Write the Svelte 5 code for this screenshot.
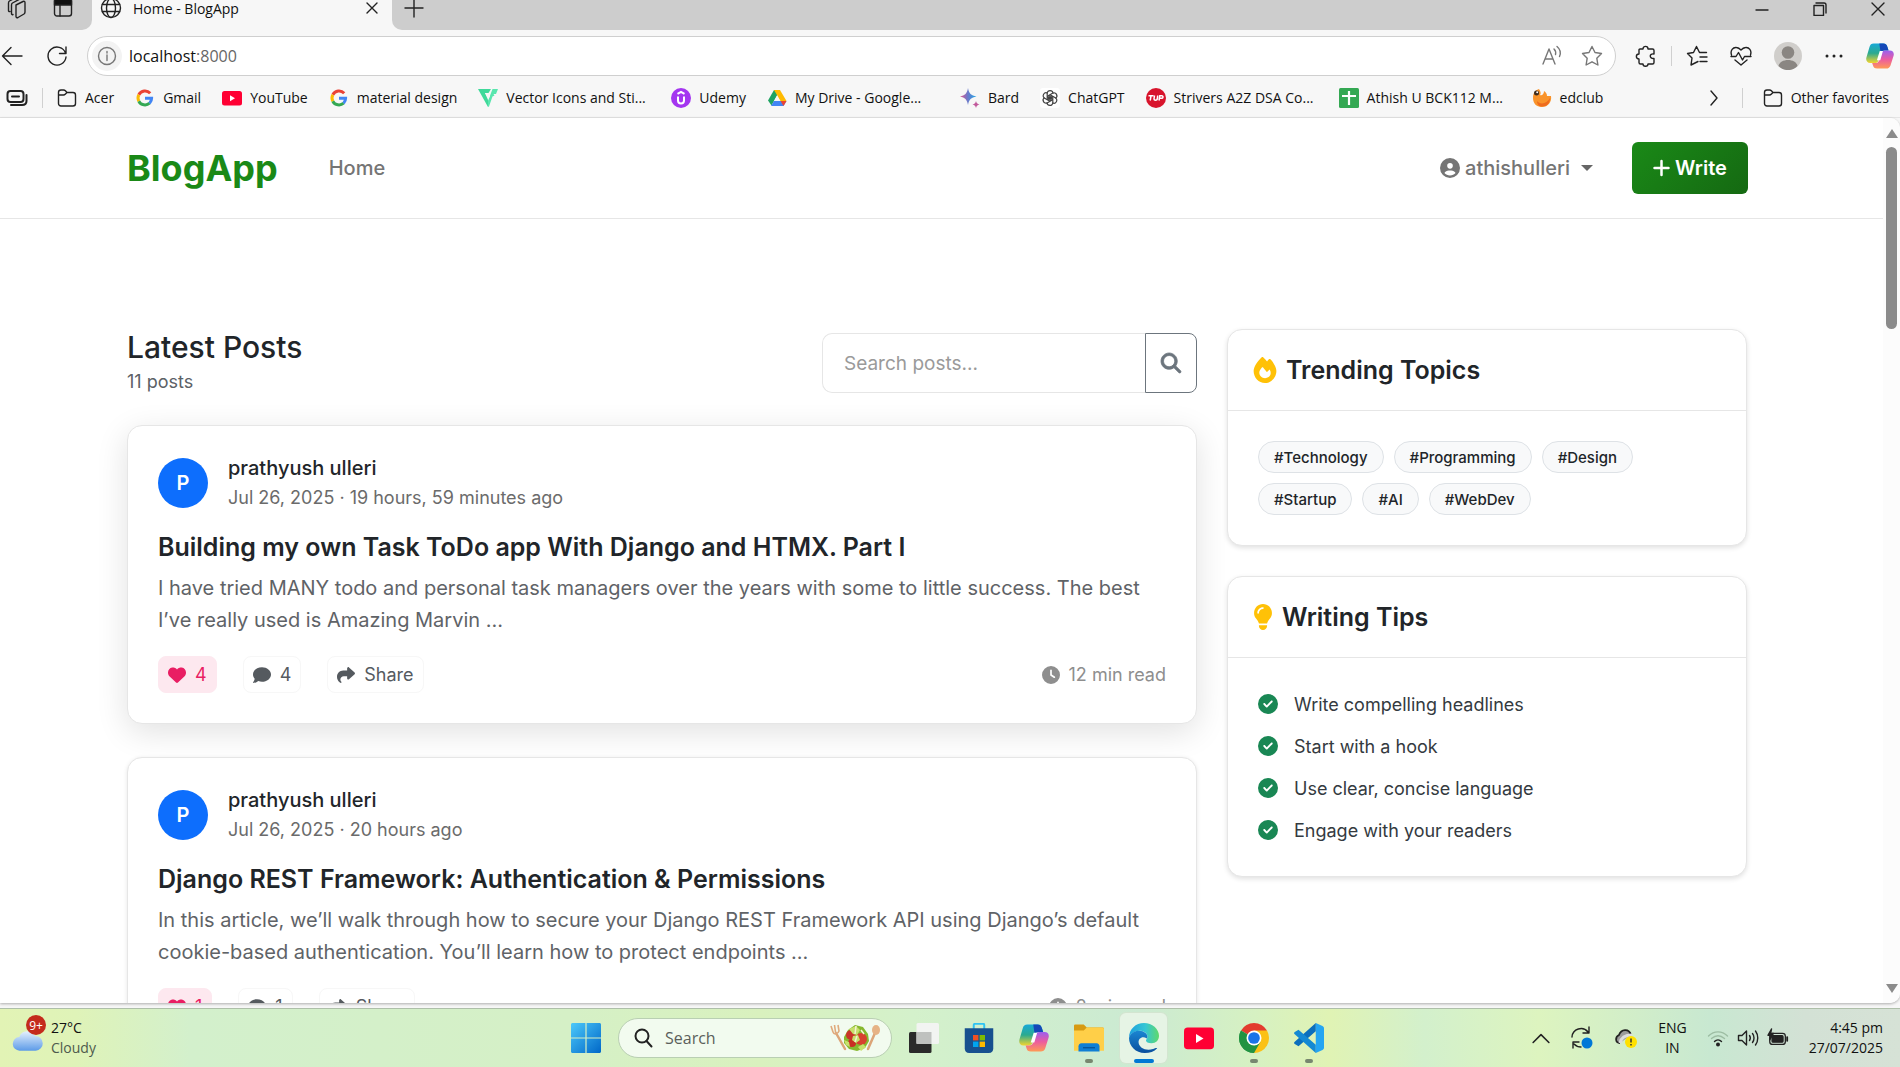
<script>
  const bookmarks = [
    { icon: 'folder', label: 'Acer' },
    { icon: 'google', label: 'Gmail' },
    { icon: 'youtube', label: 'YouTube' },
    { icon: 'google', label: 'material design' },
    { icon: 'vector', label: 'Vector Icons and Sti...', long: true },
    { icon: 'udemy', label: 'Udemy' },
    { icon: 'drive', label: 'My Drive - Google...', long: true },
    { icon: 'bard', label: 'Bard' },
    { icon: 'chatgpt', label: 'ChatGPT' },
    { icon: 'tuf', label: 'Strivers A2Z DSA Co...', long: true },
    { icon: 'sheet', label: 'Athish U BCK112 M...', long: true },
    { icon: 'edclub', label: 'edclub' }
  ];

  const posts = [
    {
      author: 'prathyush ulleri',
      when: 'Jul 26, 2025 · 19 hours, 59 minutes ago',
      title: 'Building my own Task ToDo app With Django and HTMX. Part I',
      excerpt:
        'I have tried MANY todo and personal task managers over the years with some to little success. The best I’ve really used is Amazing Marvin ...',
      likes: 4,
      comments: 4,
      read: '12 min read',
      raised: true
    },
    {
      author: 'prathyush ulleri',
      when: 'Jul 26, 2025 · 20 hours ago',
      title: 'Django REST Framework: Authentication & Permissions',
      excerpt:
        'In this article, we’ll walk through how to secure your Django REST Framework API using Django’s default cookie-based authentication. You’ll learn how to protect endpoints ...',
      likes: 1,
      comments: 1,
      read: '2 min read',
      raised: false
    }
  ];

  const topics = ['#Technology', '#Programming', '#Design', '#Startup', '#AI', '#WebDev'];
  const tips = [
    'Write compelling headlines',
    'Start with a hook',
    'Use clear, concise language',
    'Engage with your readers'
  ];

  const apps = [
    { icon: 'taskview', name: 'Task view' },
    { icon: 'store', name: 'Store' },
    { icon: 'copilot', name: 'Copilot' },
    { icon: 'explorer', name: 'File Explorer', running: true },
    { icon: 'edge', name: 'Edge', active: true },
    { icon: 'youtube', name: 'YouTube' },
    { icon: 'chrome', name: 'Chrome', running: true },
    { icon: 'vscode', name: 'Code', running: true }
  ];
</script>

{#snippet icon(name, size = 20)}
  <svg class="icon" width={size} height={size} viewBox="0 0 20 20" fill="none" stroke="none" aria-hidden="true">
    {#if name === 'folder'}
      <path d="M1.5 15.5V4.5c0-1.6 1-2.5 2.5-2.5h2.6c.8 0 1.3.3 1.8.8L10 4.5h6c1.500 0 2.500 1 2.500 2.500v8.500c0 1.500-1 2.500-2.500 2.500H4c-1.500 0-2.500-1-2.500-2.500z M1.500 7h5c.7 0 1.200-.2 1.700-.7L10 4.500" stroke="#222" stroke-width="1.400" />
    {:else if name === 'google'}
      <path d="M15.200 5.300A7 7 0 0 0 3.800 6.800" stroke="#ea4335" stroke-width="3" />
      <path d="M3.800 6.800a7 7 0 0 0 0 6.400" stroke="#fbbc05" stroke-width="3" />
      <path d="M3.800 13.200a7 7 0 0 0 10.800 2" stroke="#34a853" stroke-width="3" />
      <path d="M14.600 15.200A7 7 0 0 0 16.600 10.300H10" stroke="#4285f4" stroke-width="3" />
    {:else if name === 'youtube'}
      <rect x="0" y="3" width="20" height="14.500" rx="2.500" fill="#ff0033" />
      <path d="M8 7.300l5 3-5 3z" fill="#fff" />
    {:else if name === 'vector'}
      <path d="M0 1h13l-2.500 4H7l3.500 8-.5 6z" fill="#3fd99a" />
      <path d="M14.500 1H20l-2 5h-2.500l1 1.500-2 1L11 18.500l-1 .5v-6z" fill="#59e6ae" />
      <path d="M7 5h3.500L12 8l-1.500 3z" fill="#f7f7f7" />
    {:else if name === 'udemy'}
      <circle cx="10" cy="10" r="10" fill="#a435f0" />
      <path d="M7 8.500v4c0 4 6 4 6 0v-4M6.500 5.800L10 3.800l3.500 2" stroke="#fff" stroke-width="2" />
    {:else if name === 'drive'}
      <path d="M7 2h6l-3 5.500L4.500 17.500 1 12.500z" fill="#1ea362" />
      <path d="M7 2h6l6.500 11h-6z" fill="#ffba00" />
      <path d="M4 18l3-5h12.500l-3 5z" fill="#4285f4" />
      <path d="M13.500 13h6l-3 5z" fill="#ea4335" />
      <path d="M10 7.500L13 13H7z" fill="#f7f7f7" />
    {:else if name === 'bard'}
      <defs><linearGradient id="bardFill"><stop stop-color="#e0568c" /><stop offset=".45" stop-color="#6f78c8" /><stop offset="1" stop-color="#1fa8e8" /></linearGradient></defs>
      <path d="M8 0c1 5.500 3 7.500 8.500 8.500C11 9.500 9 11.500 8 17c-1-5.500-3-7.500-8-8.500C5 7.500 7 5.500 8 0z" fill="url(#bardFill)" />
      <path d="M16 13c.4 2 1.300 3 3.500 3.500-2.200.5-3.100 1.500-3.500 3.500-.4-2-1.300-3-3.500-3.500 2.200-.5 3.100-1.500 3.500-3.500z" fill="#c25a9c" />
    {:else if name === 'chatgpt'}
      <rect width="20" height="20" rx="3" fill="#fff" />
      <g stroke="#444" stroke-width="1.200">
        {#each [0, 60, 120, 180, 240, 300] as turn}
          <path d="M7.200 11.500V5.500c0-4 5.800-3.800 5.800 0M7.200 8.400l4.800 2.800" transform="rotate({turn} 10 10)" />
        {/each}
      </g>
    {:else if name === 'tuf'}
      <circle cx="10" cy="10" r="10" fill="#d8142c" />
      <path d="M2.500 7.800h5M5 8l-.8 4.500M8.500 7.500L8 11c0 1.500 3 1.500 3.300 0l.4-3.500M13 12.500l.8-4.700h2c1.800 0 1.500 2.500-.3 2.500h-1.800" stroke="#fff" stroke-width="1.500" />
    {:else if name === 'sheet'}
      <rect width="20" height="20" rx="1.500" fill="#34a853" />
      <path d="M10 3v14M3 8h14" stroke="#fff" stroke-width="2.200" />
    {:else if name === 'edclub'}
      <path d="M1 10C1 4 4 2 7 1c2 3 2 5 1 6 2 1 4-1 4-4 2 1 3 3 3 5l4 0c1 6-3 11-9 11S1 15 1 10z" fill="#f9932a" />
      <path d="M5 13c3 4 10 3 13-3 0 5-3 8.500-8 8.500-3 0-5-2-5-5.500z" fill="#ee6b1e" />
      <circle cx="4.500" cy="5" r="2.500" fill="#3d2b1c" /><circle cx="5.200" cy="4.300" r="1" fill="#fff" />
    {:else if name === 'copilot'}
      <defs>
        <linearGradient id="copTop" x2="0" y2="1"><stop stop-color="#17a9d8" /><stop offset=".5" stop-color="#2baa8f" /><stop offset="1" stop-color="#f3d52e" /></linearGradient>
        <linearGradient id="copEnd" x2="0" y2="1"><stop stop-color="#9a5ff0" /><stop offset=".5" stop-color="#ec5c9f" /><stop offset="1" stop-color="#ff9a55" /></linearGradient>
      </defs>
      <path d="M5.500 1h6.800c2 0 2.500 1 3 2.500l.8 2.500h-3c-1.500 0-2.200.8-2.600 2L9 13c-.5 1.500-1.300 2-2.800 2H3c-2.200 0-3.300-1.800-2.700-4L2.500 3.500C3 1.800 3.800 1 5.500 1z" fill="url(#copTop)" />
      <path d="M9.500 1h2.800c2 0 2.500 1 3 2.500l.8 2.500h-3c-1.500 0-2.200.8-2.600 2z" fill="#1448b8" />
      <path d="M14.500 19H8c-2 0-2.600-.8-3-2.200L4.400 15h2.400c1.500 0 2.200-.7 2.700-2.200L11 8c.5-1.500 1.200-2 2.600-2H17c2.200 0 3.300 1.600 2.700 3.800l-2.200 7c-.5 1.500-1.500 2.200-3 2.200z" fill="url(#copEnd)" />
      <path d="M9.800 6.500h2.300L10.200 13H7.800z" fill="#fff" />
    {:else if name === 'taskview'}
      <rect x="0" y="6" width="15" height="14" rx="1" fill="#2a2a2a" />
      <rect x="5" y="0" width="15" height="14" rx="1" fill="#f2f4f2" />
      <rect x="5" y="6" width="10" height="8" fill="#bfc1bf" />
    {:else if name === 'store'}
      <path d="M6.500 4V1.300c0-.5.300-.8.800-.8h5.400c.5 0 .8.300.8.800V4" stroke="#2fc3f3" stroke-width="1.300" />
      <path d="M.5 3.500h19V17c0 1.700-1 3-3 3h-13c-2 0-3-1.300-3-3z" fill="#17508f" />
      <path d="M6 8h3.600v3.600H6z" fill="#f25022" /><path d="M10.400 8H14v3.600h-3.600z" fill="#7fba00" />
      <path d="M6 12.400h3.600V16H6z" fill="#00a4ef" /><path d="M10.400 12.400H14V16h-3.600z" fill="#ffb900" />
    {:else if name === 'explorer'}
      <path d="M0 5V2c0-.7.400-1 1-1h5.500l2 2H19c.6 0 1 .4 1 1v4H0z" fill="#d79a12" />
      <path d="M0 5h6.500l2-2H19c.6 0 1 .4 1 1v14.500H0z" fill="#ffcf48" />
      <path d="M3 19v-3.500c0-1 .7-2 2-2h10c1.300 0 2 1 2 2V19z" fill="#0f7fd4" /><path d="M6 16.500h8" stroke="#07508f" stroke-width=".8" />
    {:else if name === 'edge'}
      <defs>
        <linearGradient id="edgeTop"><stop stop-color="#1da0de" /><stop offset=".55" stop-color="#35c6d4" /><stop offset="1" stop-color="#5fd96b" /></linearGradient>
        <linearGradient id="edgeLow" x2="0" y2="1"><stop stop-color="#1a86d2" /><stop offset="1" stop-color="#0b4f9d" /></linearGradient>
      </defs>
      <path d="M0 10C0 4 4.500 0 10 0s10 4 10 8.500c0 3-2 5-5 5-2.200 0-3.700-.8-3.700-1.800 0-.8 1-1 1-2.700C12.300 7 10 5.200 7 5.200 3 5.200.5 8 0 10z" fill="url(#edgeTop)" />
      <path d="M0 10c.8-3.200 4-5 7-4.800 3 .1 5.300 2 5.300 3.800 0 .5-.2 1-.4 1.300-3-2-5.700 0-5.500 2.700.2 3.500 5 6 9.600 4.300 1.200-.4 2.300-1 2.800-.5-2 2.200-5 3.200-8.300 3.200C4.500 20 0 15.500 0 10z" fill="url(#edgeLow)" />
    {:else if name === 'chrome'}
      <path d="M10 10L1.340 5A10 10 0 0 1 18.660 5z" fill="#e33b2e" />
      <path d="M10 10L18.660 5A10 10 0 0 1 10 20z" fill="#fbc116" />
      <path d="M10 10L10 20A10 10 0 0 1 1.340 5z" fill="#229342" />
      <path d="M10 5h8.660L14.300 12.500 10 20V10z" fill="#fbc116" /><path d="M1.340 5l4.330 7.500L10 15l4.330-2.500L10 20A10 10 0 0 1 1.340 5z" fill="#229342" />
      <circle cx="10" cy="10" r="5" fill="#fff" /><circle cx="10" cy="10" r="3.900" fill="#1a73e8" />
    {:else if name === 'vscode'}
      <path d="M14.500 0L19 2c.6.300 1 .8 1 1.500v13c0 .7-.4 1.200-1 1.500l-4.500 2z" fill="#24a5f2" />
      <path d="M14.500 0v5.500L3 15.500.5 14c-.6-.5-.6-1 0-1.500z" fill="#0b6fbd" />
      <path d="M14.500 20v-5.500L3 4.500.5 6c-.6.500-.6 1 0 1.500z" fill="#1489d3" />
    {/if}
  </svg>
{/snippet}

{#snippet line(d, size = 22, view = 22)}
  <svg class="icon line" width={size} height={size} viewBox="0 0 {view} {view}" aria-hidden="true"><path {d} /></svg>
{/snippet}

{#snippet solid(d, w, size, view = 512)}
  <svg class="icon solid" width={w} height={size} viewBox="0 0 {view} 512" aria-hidden="true"><path {d} /></svg>
{/snippet}

<div class="desktop">
  <header class="browser">
    <div class="tabstrip">
      <div class="strip-left">
        <button class="plain" aria-label="Workspaces">{@render line('M9 8l7-3.500c1-.5 2 0 2 1V15c0 1-.3 1.500-1 2l-6 3.500c-1 .5-2 0-2-1zM6 17.500C5 18 4.500 17.500 4.500 16.500V8c0-1 .3-1.500 1-2L13 2M3 14.500c-1 .3-1.500 0-1.500-1V6c0-1 .3-1.500 1-2L9 .500')}</button>
        <button class="plain" aria-label="Tab actions">
          <svg class="icon line" width="20" height="22" viewBox="0 0 20 22" aria-hidden="true"><rect x="1.500" y="2" width="17" height="17" rx="2.500" /><path d="M7 8v11" /><path d="M1.500 2h17v6h-17z" fill="#111" /></svg>
        </button>
      </div>
      <div class="tab">
        <svg class="icon line" width="22" height="22" viewBox="0 0 22 22" aria-hidden="true"><circle cx="11" cy="11" r="9.500" /><ellipse cx="11" cy="11" rx="4.500" ry="9.500" /><path d="M2.500 7.500h17M2.500 14.500h17" /></svg>
        <span class="tab-title">Home - BlogApp</span>
        <button class="plain" aria-label="Close tab">{@render line('M2 2l10 10M12 2L2 12', 14, 14)}</button>
      </div>
      <button class="plain new-tab" aria-label="New tab">{@render line('M10 1v18M1 10h18', 20, 20)}</button>
      <div class="window-controls">
        <button class="plain" aria-label="Minimize">{@render line('M1 8h12', 14, 14)}</button>
        <button class="plain" aria-label="Restore">{@render line('M1 3.500h9.500v10H1zM3 1h8c1.200 0 2 .8 2 2v8', 14, 14)}</button>
        <button class="plain" aria-label="Close">{@render line('M1 1l12 12M13 1L1 13', 14, 14)}</button>
      </div>
    </div>

    <div class="toolbar">
      <button class="plain" aria-label="Back">{@render line('M21 11H1.500M10 2.500L1.500 11l8.500 8.500')}</button>
      <button class="plain" aria-label="Refresh">{@render line('M19.500 8A9 9 0 1 0 20 12M20 2v6.500h-6.500')}</button>
      <div class="address">
        <span class="site-info"><svg class="icon line muted" width="20" height="20" viewBox="0 0 20 20" aria-hidden="true"><circle cx="10" cy="10" r="8.500" /><path d="M10 9v5.500M10 5.500v1.500" /></svg></span>
        <span class="url">localhost<span>:8000</span></span>
        <button class="plain muted" aria-label="Read aloud">{@render line('M2 19L8 4l6 15M4.500 14h7M13 4c1.500 1.500 2 3.500 1.500 5.500M16 1.500c3 2.500 4 6.500 2.500 10')}</button>
        <button class="plain muted" aria-label="Add to favorites">{@render line('M11 1.500l3 6 6.500 1-4.700 4.700 1.100 6.800-5.900-3.200-5.900 3.200 1.100-6.800L1.500 8.500l6.500-1z')}</button>
      </div>
      <div class="tools">
        <button class="plain" aria-label="Extensions">{@render line('M5 4h3c0-3.500 5-3.500 5 0h4.500c1 0 1.500.5 1.500 1.500V9c-5-1-5 5 0 4.500v4c0 1-.5 1.500-1.500 1.500H13c0 3-5 3-5 0H5.500c-1 0-1.500-.5-1.500-1.500V14c-3.500 0-3.500-5 0-5V5c0-.6.400-1 1-1z')}</button>
        <span class="rule"></span>
        <button class="plain" aria-label="Favorites">{@render line('M12 16.500L5 20l1-7L1.500 8.500 7.500 7.500 10.500 1.500l3 6h7M14 12h7M14 16.500h7')}</button>
        <button class="plain" aria-label="Browser essentials">{@render line('M1.500 10C0 5.500 3 2 6.500 2.500 8.500 2.700 10 4 11 5c1-1 2.500-2.300 4.500-2.500C19 2 22 5.500 20.500 10M1 11.500h5l2.500-4 4 7.500 2-3.500H21M5 15l6 5 6-5')}</button>
        <span class="profile"><svg class="icon" width="28" height="28" viewBox="0 0 28 28" aria-hidden="true"><circle cx="14" cy="14" r="14" fill="#d0cecb" /><circle cx="14" cy="10.500" r="6.300" fill="#8a8682" /><path d="M4.500 24C6 16 22 16 23.500 24 18 29.500 10 29.500 4.500 24z" fill="#8a8682" /></svg></span>
        <button class="plain" aria-label="Settings and more"><svg class="icon" width="20" height="20" viewBox="0 0 20 20" aria-hidden="true"><g fill="#222"><circle cx="3" cy="10" r="1.500" /><circle cx="10" cy="10" r="1.500" /><circle cx="17" cy="10" r="1.500" /></g></svg></button>
        <button class="plain" aria-label="Copilot">{@render icon('copilot', 28)}</button>
      </div>
    </div>

    <nav class="bookmarks" aria-label="Favorites bar">
      <svg class="icon line" width="22" height="20" viewBox="0 0 22 20" aria-hidden="true"><rect x="1.500" y="3" width="16" height="11" rx="3" stroke-width="2" /><path d="M6 8.500h7M5 17h11c3 0 4.500-1.500 4.500-4V7" stroke-width="2" /></svg>
      <span class="rule"></span>
      <div class="bookmark-list">
        {#each bookmarks as b}
          <a href="#top" class:long={b.long}>{@render icon(b.icon)}{b.label}</a>
        {/each}
      </div>
      <div class="bookmark-end">
        <button class="plain" aria-label="More favorites">{@render line('M5 1l6 7-6 7', 16, 16)}</button>
        <span class="rule"></span>
        <a href="#top">{@render icon('folder')}Other favorites</a>
      </div>
    </nav>
  </header>

  <div class="viewport">
    <div class="page" id="top">
      <nav class="site-nav" aria-label="Site">
        <a class="brand" href="#top">BlogApp</a>
        <a class="nav-link" href="#top">Home</a>
        <button class="plain account">
          {@render solid('M399 384.200C376.900 345.800 335.400 320 288 320H224c-47.400 0-88.900 25.800-111 64.200c35.200 39.200 86.200 63.800 143 63.800s107.800-24.700 143-63.800zM0 256a256 256 0 1 1 512 0A256 256 0 1 1 0 256zm256 16a72 72 0 1 0 0-144 72 72 0 1 0 0 144z', 20, 20)}
          athishulleri<span class="caret"></span>
        </button>
        <button class="write">
          <svg class="icon" width="17" height="18" viewBox="0 0 17 18" aria-hidden="true"><path d="M8.500 2v14M1.500 9h14" stroke="#fff" stroke-width="2.500" stroke-linecap="round" /></svg>Write
        </button>
      </nav>

      <main class="content">
        <section class="feed">
          <div class="feed-head">
            <div>
              <h1>Latest Posts</h1>
              <p class="count">11 posts</p>
            </div>
            <form class="search" onsubmit={(e) => e.preventDefault()}>
              <input type="search" placeholder="Search posts..." aria-label="Search posts" />
              <button aria-label="Search">{@render solid('M416 208c0 45.900-14.900 88.300-40 122.700L502.600 457.400c12.500 12.500 12.500 32.800 0 45.300s-32.800 12.500-45.300 0L330.700 376c-34.400 25.200-76.800 40-122.700 40C93.100 416 0 322.900 0 208S93.100 0 208 0S416 93.100 416 208zM208 352a144 144 0 1 0 0-288 144 144 0 1 0 0 288z', 20, 20)}</button>
            </form>
          </div>

          {#each posts as post}
            <article class="post" class:raised={post.raised}>
              <div class="byline">
                <span class="avatar">P</span>
                <div>
                  <div class="author">{post.author}</div>
                  <div class="when">{post.when}</div>
                </div>
              </div>
              <h2>{post.title}</h2>
              <p class="excerpt">{post.excerpt}</p>
              <div class="actions">
                <button class="action liked">{@render solid('M47.600 300.400L228.300 469.100c7.500 7 17.400 10.900 27.700 10.900s20.200-3.900 27.700-10.900L464.400 300.400c30.400-28.300 47.600-68 47.600-109.500v-5.800c0-69.900-50.500-129.500-119.400-141C347 36.500 300.600 51.400 268 84L256 96 244 84c-32.600-32.600-79-47.500-124.600-39.900C50.500 55.600 0 115.200 0 185.100v5.800c0 41.500 17.200 81.200 47.600 109.500z', 18, 18)}{post.likes}</button>
                <button class="action">{@render solid('M512 240c0 114.900-114.600 208-256 208c-37.100 0-72.300-6.400-104.100-17.900c-11.900 8.700-31.300 20.600-54.300 30.600C73.600 471.100 44.700 480 16 480c-6.500 0-12.300-3.900-14.800-9.900c-2.500-6-1.100-12.800 3.400-17.400c3-3 8-9 21.700-28.700c10-16.600 19.500-38.400 21.400-62.900C17.700 326.800 0 285.100 0 240C0 125.100 114.600 32 256 32s256 93.100 256 208z', 18, 18)}{post.comments}</button>
                <button class="action">{@render solid('M307 34.800c-11.500 5.100-19 16.600-19 29.200v64H176C78.800 128 0 206.800 0 304C0 417.300 81.500 467.900 100.200 478.100c2.500 1.400 5.300 1.900 8.100 1.900c10.900 0 19.700-8.900 19.700-19.700c0-7.500-4.300-14.400-9.800-19.500C108.800 431.900 96 414.400 96 384c0-53 43-96 96-96h96v64c0 12.600 7.400 24.100 19 29.200s25 3 34.400-5.400l160-144c6.700-6.100 10.600-14.700 10.600-23.800s-3.800-17.700-10.600-23.800l-160-144c-9.400-8.500-22.900-10.600-34.400-5.400z', 18, 18)}Share</button>
                <span class="read">{@render solid('M256 0a256 256 0 1 1 0 512A256 256 0 1 1 256 0zM232 120V256c0 8 4 15.500 10.700 20l96 64c11 7.400 25.900 4.400 33.300-6.700s4.400-25.900-6.700-33.300L280 243.200V120c0-13.300-10.700-24-24-24s-24 10.700-24 24z', 18, 18)}{post.read}</span>
              </div>
            </article>
          {/each}
        </section>

        <aside class="side">
          <section class="panel">
            <h3>{@render solid('M159.300 5.400c7.800-7.300 19.900-7.200 27.700 .1c27.600 25.900 53.500 53.800 77.700 84c11-14.400 23.500-30.100 37-42.900c7.900-7.400 20.100-7.400 28 .1c34.600 33 63.900 76.600 84.500 118c20.300 40.800 33.800 82.500 33.800 111.900C448 404.200 348.200 512 224 512C98.400 512 0 404.100 0 276.500c0-38.400 17.800-85.300 45.400-131.700C73.300 97.700 112.700 48.600 159.300 5.400zM225.700 416c25.300 0 47.700-7 68.800-21c42.100-29.400 53.400-88.200 28.100-134.400c-4.500-9-16-9.600-22.500-2l-25.200 29.300c-6.600 7.600-18.500 7.400-24.700-.5c-16.500-21-46-58.500-62.800-79.800c-6.300-8-18.300-8.100-24.700-.1c-33.800 42.500-50.800 69.300-50.800 99.400C112 375.400 162.600 416 225.700 416z', 24, 26, 448)}Trending Topics</h3>
            <div class="tags">
              {#each topics as t}<a href="#top">{t}</a>{/each}
            </div>
          </section>
          <section class="panel">
            <h3>{@render solid('M272 384c9.600-31.900 29.500-59.100 49.200-86.200c5.200-7.100 10.400-14.200 15.400-21.400c19.800-28.500 31.400-63 31.400-100.300C368 78.800 289.200 0 192 0S16 78.800 16 176c0 37.300 11.600 71.900 31.400 100.300c5 7.200 10.200 14.300 15.400 21.400c19.800 27.100 39.700 54.400 49.200 86.200H272zM192 512c44.200 0 80-35.800 80-80V416H112v16c0 44.200 35.800 80 80 80zM112 176c0 8.800-7.200 16-16 16s-16-7.200-16-16c0-61.900 50.100-112 112-112c8.800 0 16 7.200 16 16s-7.200 16-16 16c-44.200 0-80 35.800-80 80z', 20, 26, 384)}Writing Tips</h3>
            <ul>
              {#each tips as t}
                <li>{@render solid('M256 512A256 256 0 1 0 256 0a256 256 0 1 0 0 512zM369 209L241 337c-9.400 9.400-24.600 9.400-33.900 0l-64-64c-9.400-9.400-9.400-24.600 0-33.900s24.600-9.400 33.900 0l47 47L335 175c9.400-9.400 24.600-9.400 33.900 0s9.400 24.600 0 33.900z', 20, 20)}{t}</li>
              {/each}
            </ul>
          </section>
        </aside>
      </main>
    </div>
    <div class="scrollbar" aria-hidden="true">
      <span class="arrow up"></span>
      <span class="thumb"></span>
      <span class="arrow down"></span>
    </div>
  </div>

  <footer class="taskbar">
    <div class="weather">
      <div class="weather-icon">
        <svg class="icon" width="31" height="26" viewBox="0 0 32 26" aria-hidden="true"><defs><linearGradient id="cloud" x2="0" y2="1"><stop stop-color="#e4f0fd" /><stop offset="1" stop-color="#5d9be8" /></linearGradient></defs><path d="M8 24a7 7 0 0 1-.5-14A9 9 0 0 1 24 9a7.500 7.500 0 0 1 .5 15z" fill="url(#cloud)" /></svg>
        <span class="badge">9+</span>
      </div>
      <div class="stack"><span>27°C</span><span class="soft">Cloudy</span></div>
    </div>

    <div class="launcher">
      <button class="plain" aria-label="Start">
        <svg class="icon" width="30" height="30" viewBox="0 0 30 30" aria-hidden="true"><defs><linearGradient id="win" x2="1" y2="1"><stop stop-color="#4cc9fa" /><stop offset="1" stop-color="#0067c8" /></linearGradient></defs><path d="M0 1.500C0 .7.700 0 1.500 0H14.400v14.400H0zM15.600 0h12.900c.8 0 1.500.7 1.500 1.500v12.900H15.600zM0 15.600h14.400V30H1.500C.7 30 0 29.300 0 28.500zM15.600 15.600H30v12.900c0 .8-.7 1.500-1.500 1.500H15.600z" fill="url(#win)" /></svg>
      </button>
      <label class="task-search">
        <svg class="icon line" width="20" height="20" viewBox="0 0 20 20" aria-hidden="true"><circle cx="9" cy="8" r="6.500" stroke-width="2" /><path d="M13.500 13l5 5.500" stroke-width="2" /></svg>
        <input type="text" placeholder="Search" aria-label="Search" />
        <svg class="icon" width="52" height="28" viewBox="0 0 52 28" aria-hidden="true">
          <path d="M6 9l9 16M45 9L38 25" stroke="#dca578" stroke-width="2.500" stroke-linecap="round" />
          <path d="M1 2l2 6c1 3 5 2 6-1L8 1M4.500 1l1 7" stroke="#e0aa7c" stroke-width="1.600" fill="none" /><ellipse cx="46" cy="6" rx="4" ry="5" fill="#e6b385" />
          <path d="M14 13l4-7 7-5 8 2 5 7 1 7-4 7-8 3-8-2-5-6z" fill="#86b82e" />
          <circle cx="21" cy="11" r="5" fill="#c93528" /><circle cx="31" cy="15" r="6" fill="#d8402f" /><circle cx="22" cy="19" r="4" fill="#c92f24" />
          <path d="M19 5l7-3 4 4-3 5-4-1zM23 12l5-1 2 5-4 3-4-3zM14 16l5 2 1 5-4-2zM28 23l5-3 3 3-5 4z" fill="#c7e06c" />
          <path d="M26 2l-1 8M27 12l-2 6M31 6l3 4" stroke="#f3f3d2" stroke-width="1.500" fill="none" />
        </svg>
      </label>
      {#each apps as app}
        <button class="plain app" class:active={app.active} class:running={app.running} aria-label={app.name}>{@render icon(app.icon, 30)}</button>
      {/each}
    </div>

    <div class="tray">
      {@render line('M1 12l7-7 7 7', 18, 16)}
      <svg class="icon line" width="24" height="24" viewBox="0 0 24 24" aria-hidden="true"><path d="M2 11A9 9 0 0 1 18 6M19 1v6h-6M3 22v-6h6M4 18c2 2 4 3 7 3" /><circle cx="17" cy="17" r="5.500" fill="#0078d7" stroke="none" /></svg>
      <svg class="icon" width="24" height="22" viewBox="0 0 24 22" aria-hidden="true"><path d="M6 16C1 16 1 10 5 8c2-6 10-7 12 0" fill="#9b9b9b" stroke="#222" stroke-width="1.800" /><path d="M6 16c1-5 5-8 12-8" stroke="#ddd" stroke-width="3" fill="none" /><circle cx="17" cy="15" r="6" fill="#ffe000" /><path d="M17 11.500v4M17 17v1.500" stroke="#333" stroke-width="1.500" /></svg>
      <div class="stack centered"><span>ENG</span><span>IN</span></div>
      <div class="status">
        <svg class="icon line" width="22" height="20" viewBox="0 0 22 20" aria-hidden="true"><path d="M1.500 8C7 2.500 15 2.500 20.500 8" stroke="#9dbda3" /><path d="M4.500 10.500c4-3.500 9-3.500 13 0" stroke="#9dbda3" /><path d="M7.500 13.500c2-2 5-2 7 0" /><circle cx="11" cy="16.500" r="2" fill="#222" stroke="none" /></svg>
        <svg class="icon line" width="22" height="20" viewBox="0 0 22 20" aria-hidden="true"><path d="M1.500 7.500H5l4.500-4.500v14L5 12.500H1.500zM12.500 7.500c1 1.500 1 3.500 0 5M15.500 5.500c2 2.500 2 6.500 0 9M18.500 3c3 4 3 10 0 14" /></svg>
        <svg class="icon line" width="22" height="20" viewBox="0 0 24 20" aria-hidden="true"><rect x="3" y="5" width="17" height="12" rx="3" /><rect x="5.500" y="7.500" width="12" height="7" rx="1" fill="#222" /><path d="M22 9v4" stroke-width="2" /><path d="M5 0L1 7h3l-1 5 4-7H4z" fill="#222" /></svg>
      </div>
      <div class="stack end"><span>4:45 pm</span><span>27/07/2025</span></div>
    </div>
  </footer>
</div>

<style>
  :global(body) { margin: 0; }
  .desktop, .desktop * { box-sizing: border-box; }
  .desktop { height: 100vh; display: flex; flex-direction: column; overflow: hidden; background: #f7f7f7; font-family: 'Open Sans', 'Noto Sans', sans-serif; font-size: 14px; color: #111; }
  a { color: inherit; text-decoration: none; }
  .icon { display: block; flex: none; }
  .line { fill: none; stroke: #222; stroke-width: 1.4; stroke-linecap: round; stroke-linejoin: round; }
  .solid { fill: currentColor; }
  .muted { stroke: #777; }
  .muted :global(.line) { stroke: #777; }
  .plain { border: 0; background: none; padding: 0; font: inherit; color: inherit; display: flex; align-items: center; }
  .rule { width: 1px; height: 20px; background: #d0d0d0; }

  .browser { flex: none; border-bottom: 1px solid #e5e5e5; }
  .tabstrip { display: flex; height: 30px; background: #f7f7f7; }
  .strip-left { display: flex; gap: 24px; width: 92px; padding: 0 0 14px 7px; align-items: center; background: #cdcdcd; border-radius: 0 0 10px 0; }
  .tab { width: 300px; display: flex; align-items: center; padding: 0 13px 14px 8px; gap: 11px; }
  .tab-title { flex: 1; }
  .new-tab { padding: 0 12px 14px; background: #cdcdcd; border-radius: 0 0 0 10px; }
  .window-controls { flex: 1; display: flex; justify-content: flex-end; gap: 44px; padding: 0 15px 12px; background: #cdcdcd; }
  .toolbar { display: flex; align-items: center; height: 52px; gap: 23px; padding: 0 6px 0 1px; }
  .address { flex: 1; display: flex; align-items: center; height: 40px; gap: 18px; margin-left: -4px; padding: 0 12px 0 4px; background: #fff; border: 1px solid #cfcfcf; border-radius: 20px; }
  .site-info { width: 30px; height: 30px; border-radius: 50%; background: #f3f3f3; display: grid; place-items: center; }
  .url { flex: 1; margin-left: -11px; font-size: 16px; }
  .url span { color: #666; }
  .tools { display: flex; align-items: center; gap: 22px; margin-left: -4px; }
  .tools .rule { margin: 0 -8px; }
  .bookmarks { display: flex; align-items: center; height: 35px; padding: 0 11px 4px 6px; gap: 14px; }
  .bookmarks a { display: flex; align-items: center; gap: 8px; white-space: nowrap; }
  .bookmark-list { flex: 1; display: flex; gap: 21px; min-width: 0; }
  .bookmark-list .long { width: 172px; }
  .bookmark-end { display: flex; align-items: center; gap: 20px; }

  .viewport { flex: 1; min-height: 0; display: flex; background: #fff; border-radius: 0 10px 10px 0; overflow: hidden; box-shadow: 0 1px 3px rgba(0, 0, 0, 0.3); margin-bottom: 5px; }
  .page { flex: 1; min-width: 0; overflow: hidden; font-family: Inter, sans-serif; color: #212529; }
  .site-nav { display: flex; align-items: center; height: 101px; padding: 0 135px 0 127px; border-bottom: 1px solid #e6e6e6; }
  .brand { font-size: 36px; font-weight: 700; color: #1a8917; }
  .nav-link { margin-left: 51px; font-size: 20px; font-weight: 500; color: #757575; }
  .account { margin-left: auto; gap: 5px; font-size: 20px; font-weight: 500; color: #757575; }
  .caret { margin-left: 6px; border: 6px solid transparent; border-top-color: #666; border-bottom: 0; }
  .write { display: flex; align-items: center; justify-content: center; gap: 5px; width: 116px; height: 52px; margin-left: 39px; border: 0; border-radius: 6px; background: linear-gradient(135deg, #1a8917, #156912); color: #fff; font: 600 20px Inter, sans-serif; }

  .content { display: grid; grid-template-columns: 1070fr 520fr; gap: 30px; padding: 110px 136px 0 127px; align-items: start; }
  .feed-head { display: flex; justify-content: space-between; margin-bottom: 32px; padding-top: 4px; }
  h1 { margin: 0; font-size: 30px; line-height: 28px; font-weight: 500; }
  .count { margin: 10px 0 0; font-size: 18px; line-height: 22px; color: #5c6166; }
  .search { display: flex; width: 375px; height: 60px; }
  .search input { flex: 1; min-width: 0; padding: 0 21px; border: 1px solid #e6e6e6; border-right: 0; border-radius: 10px 0 0 10px; outline: 0; font: 19px Inter, sans-serif; background: #fff; }
  .search input::placeholder { color: #9a9a9a; opacity: 1; }
  .search button { width: 52px; display: grid; place-items: center; padding: 0; border: 1px solid #6c757d; border-radius: 0 8px 8px 0; background: #fff; color: #6c757d; }
  .search button :global(svg) { stroke: #6c757d; stroke-width: 20; overflow: visible; }

  .post { border: 1px solid #e6e6e6; border-radius: 15px; background: #fff; padding: 28px 30px 30px; margin-bottom: 33px; box-shadow: 0 1px 4px rgba(0, 0, 0, 0.1); }
  .post.raised { box-shadow: 0 8px 32px rgba(0, 0, 0, 0.12); }
  .byline { display: flex; align-items: center; gap: 20px; }
  .avatar { width: 50px; height: 50px; border-radius: 50%; background: #0d6efd; color: #fff; display: grid; place-items: center; font-size: 20px; font-weight: 600; }
  .author { font-size: 20px; line-height: 29px; font-weight: 500; }
  .when { font-size: 18px; line-height: 29px; color: #6b6b6b; }
  h2 { margin: 19px 0 9px; font-size: 25px; line-height: 32px; font-weight: 600; }
  .excerpt { margin: 0; font-size: 20px; line-height: 32px; color: #5f6367; }
  .actions { display: flex; align-items: center; gap: 26px; margin-top: 20px; }
  .action { display: flex; align-items: center; gap: 9px; height: 37px; padding: 0 9px; border: 1px solid #f7f7f7; border-radius: 8px; background: #fff; color: #555a5f; font: 18px Inter, sans-serif; }
  .action.liked { background: #fde8ef; border-color: #fde8ef; color: #e91e63; }
  .read { display: flex; align-items: center; gap: 9px; margin-left: auto; font-size: 18px; color: #8e8e8e; }

  .panel { border: 1px solid #e6e6e6; border-radius: 15px; background: #fff; margin-bottom: 30px; box-shadow: 0 2px 5px rgba(0, 0, 0, 0.12); }
  h3 { margin: 0; display: flex; align-items: center; gap: 9px; height: 81px; padding: 0 25px; border-bottom: 1px solid #e6e6e6; font-size: 25px; font-weight: 600; }
  h3 :global(svg) { color: #ffc107; }
  .tags { display: flex; flex-wrap: wrap; gap: 10px; padding: 30px 90px 30px 30px; }
  .tags a { height: 32px; display: flex; align-items: center; padding: 0 15px; border: 1px solid #dee2e6; border-radius: 16px; background: #f8f9fa; font-size: 15px; font-weight: 500; }
  ul { margin: 0; padding: 25px 30px; list-style: none; }
  li { display: flex; align-items: center; gap: 16px; height: 42px; font-size: 18px; color: #343a40; }
  li :global(svg) { color: #198754; }

  .scrollbar { width: 17px; display: flex; flex-direction: column; align-items: center; padding: 11px 0 10px; background: #fcfcfc; }
  .arrow { border: 6px solid transparent; }
  .up { border-top: 0; border-bottom: 9px solid #8b8b8b; }
  .down { margin-top: auto; border-bottom: 0; border-top: 9px solid #8b8b8b; }
  .thumb { width: 11px; height: 182px; margin-top: 9px; border-radius: 6px; background: #8b8b8b; }

  .taskbar { flex: none; height: 59px; display: grid; grid-template-columns: 1fr auto 1fr; align-items: center; padding: 0 17px 0 12px; border-top: 1px solid #aebfa9; background: linear-gradient(90deg, #e2f3b5 0, #dff3b8 4%, #d3f0cc 10%, #d5f0c6 30%, #d9f1be 40%, #d4f1cb 48%, #cbead2 60%, #d6f1c2 66%, #e0f3b4 70%, #d3f0cc 75%, #ddf4bf 81%, #c8e8d1 90%, #d3e1d5 95%, #d6e2d6 100%); }
  .stack { display: flex; flex-direction: column; font-size: 14px; line-height: 20px; }
  .centered { align-items: center; }
  .end { align-items: flex-end; }
  .soft { color: #4d5a4d; }
  .weather { display: flex; align-items: center; gap: 8px; }
  .weather-icon { position: relative; padding-top: 4px; }
  .badge { position: absolute; left: 14px; top: -8px; width: 20px; height: 20px; border-radius: 50%; background: #c42b1c; color: #fff; font-size: 12px; display: grid; place-items: center; }
  .launcher { display: flex; align-items: center; gap: 8px; padding-left: 8px; }
  .task-search { display: flex; align-items: center; gap: 12px; width: 274px; height: 40px; margin: 0 0 0 9px; padding: 0 9px 0 14px; border: 1px solid #b9cfb3; border-radius: 20px; background: #f2fbef; }
  .task-search input { flex: 1; min-width: 0; border: 0; padding: 0; outline: 0; background: none; font: 16px 'Open Sans', sans-serif; }
  .task-search input::placeholder { color: #5b5f5b; opacity: 1; }
  .app { position: relative; width: 47px; height: 50px; justify-content: center; border-radius: 6px; }
  .active { background: #e6f4e5; box-shadow: 0 0 0 1px #d3e5d0; }
  .running::after, .active::after { content: ''; position: absolute; bottom: 0; width: 8px; height: 4px; border-radius: 2px; background: #77876f; }
  .active::after { width: 20px; background: #0078d4; }
  .tray { display: flex; align-items: center; justify-content: flex-end; gap: 20px; }
  .status { display: flex; align-items: center; gap: 8px; }
</style>
